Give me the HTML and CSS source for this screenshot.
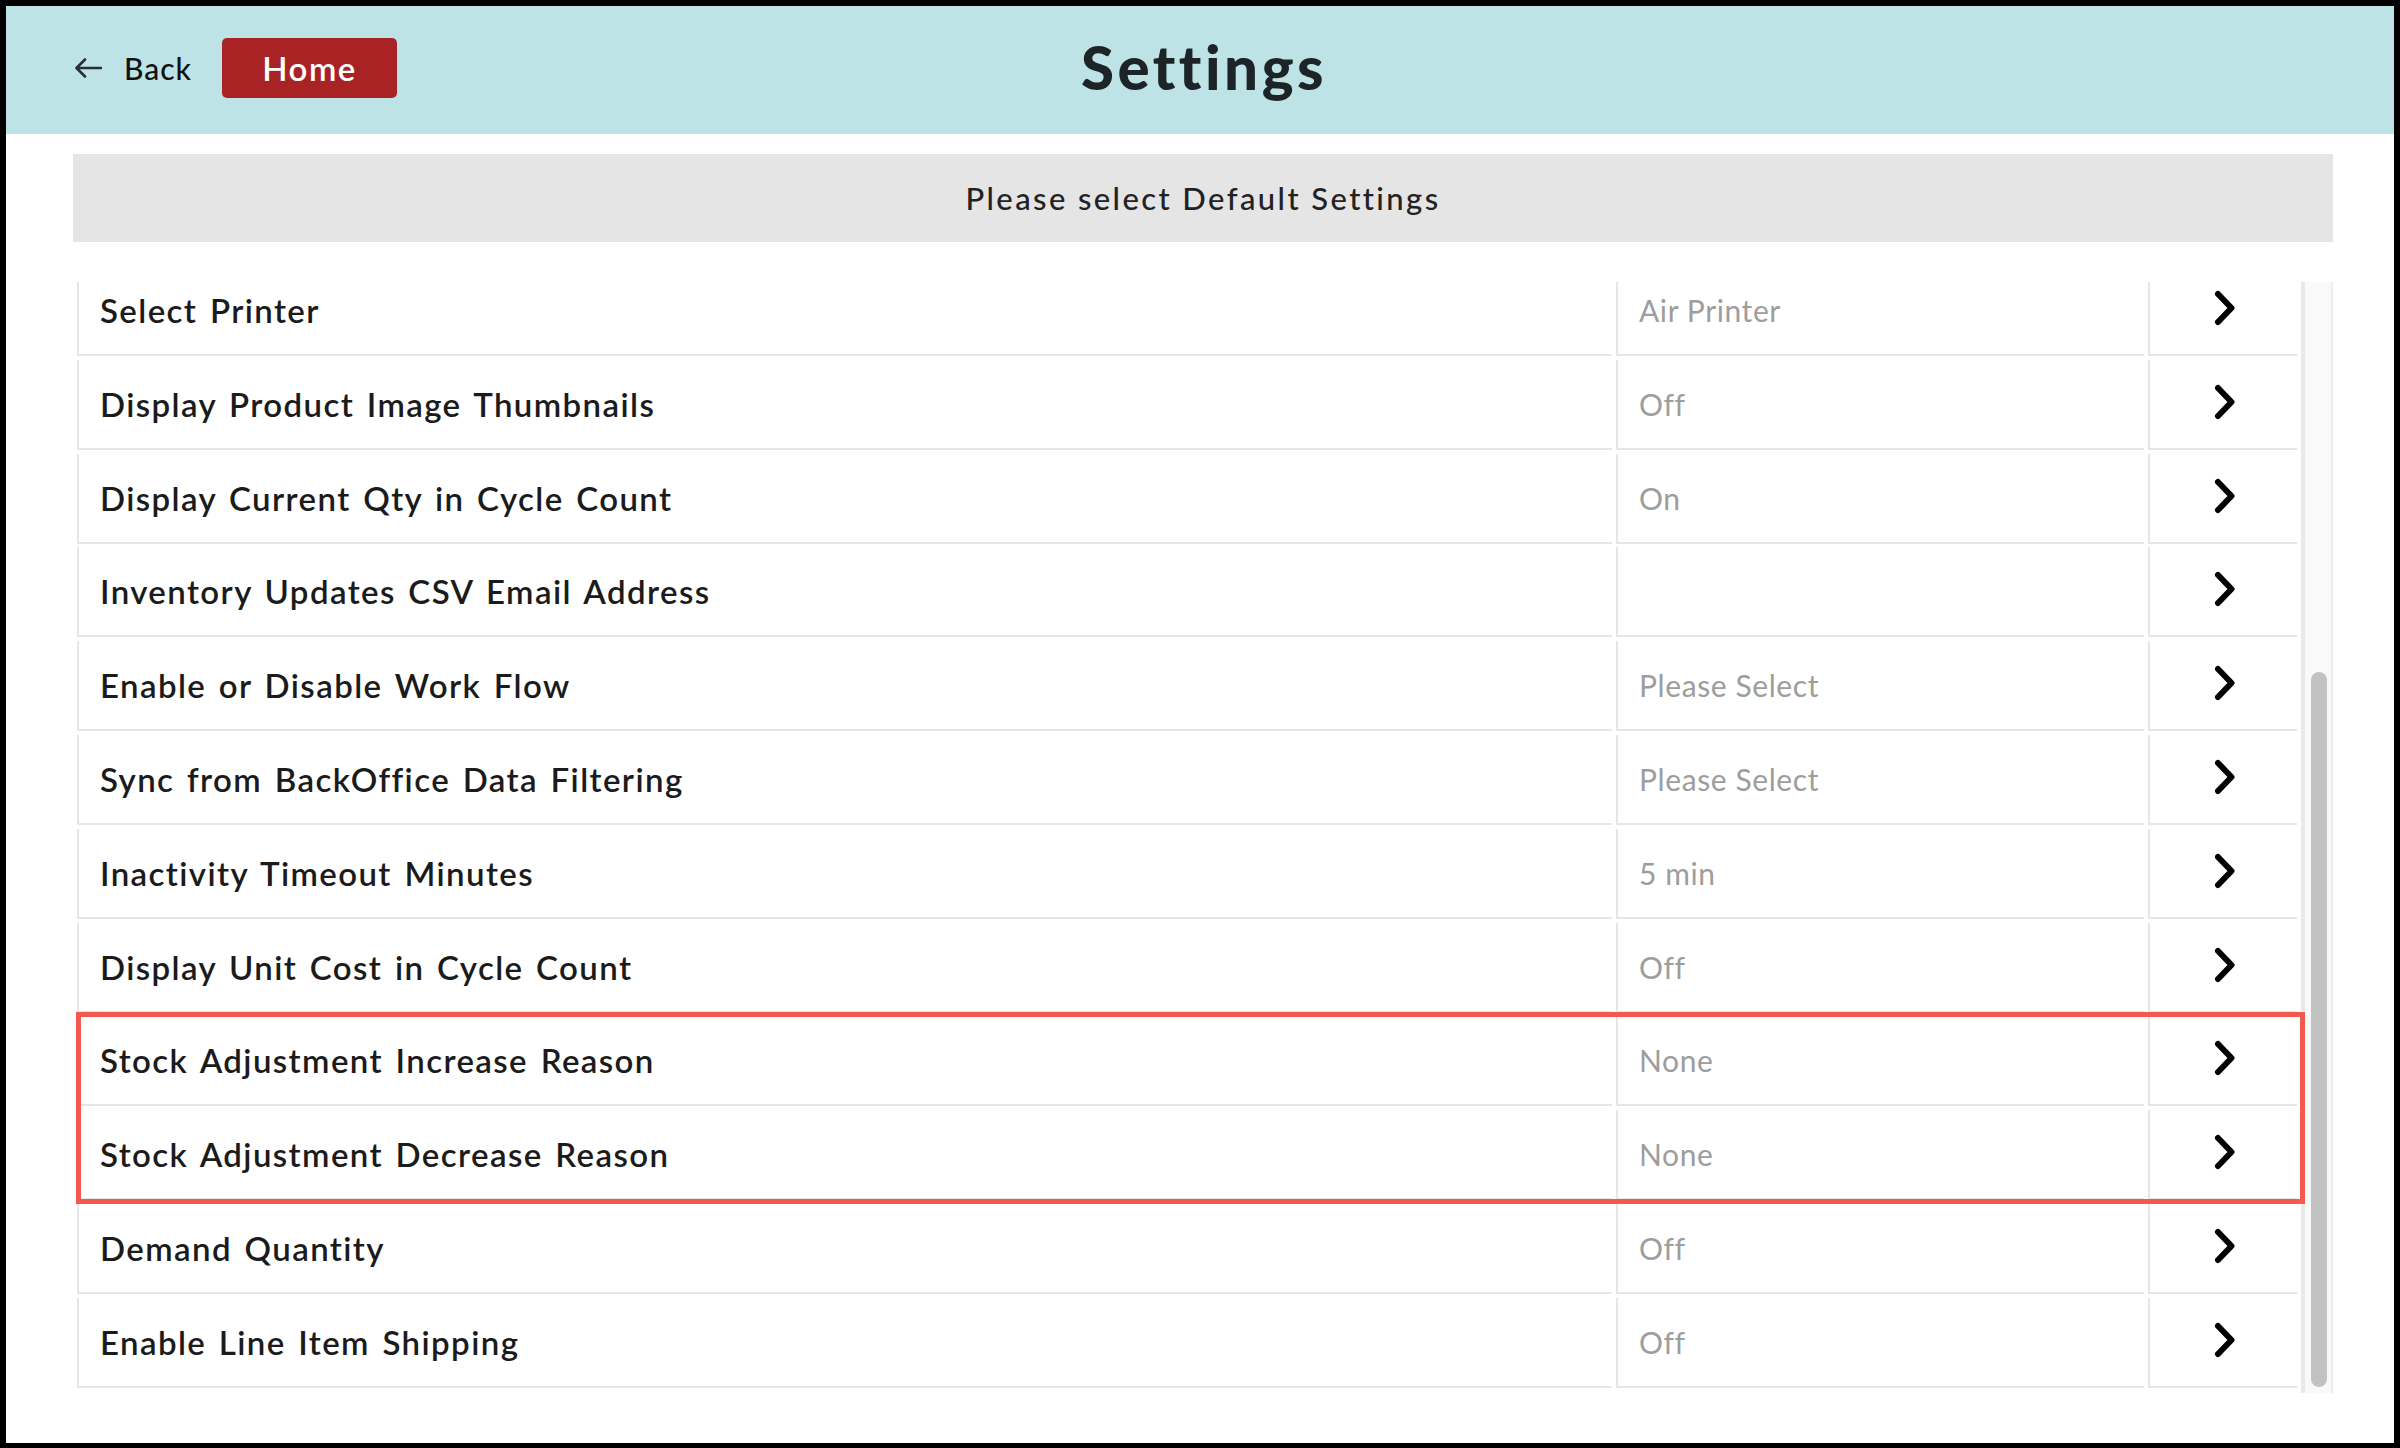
FILE: index.html
```html
<!DOCTYPE html>
<html lang="en">
<head>
<meta charset="utf-8">
<title>Settings</title>
<link rel="stylesheet" href="styles.css">
</head>
<body>
<div class="frame">
  <header class="topbar">
    <div class="nav-left">
      <a class="back" href="#">
        <svg class="back-icon" width="28" height="22" viewBox="0 0 28 22" aria-hidden="true">
          <path d="M27 11H3M11 2.5L2.5 11L11 19.5" fill="none" stroke="#2a2f31" stroke-width="2.6" stroke-linecap="round" stroke-linejoin="round"/>
        </svg>
        <span>Back</span>
      </a>
      <button class="home" type="button">Home</button>
    </div>
    <h1 class="title">Settings</h1>
    <div class="nav-right"></div>
  </header>

  <main class="content">
    <div class="banner">Please select Default Settings</div>

    <div class="list-area">
      <div class="list">
        <div class="rows">
          <div class="row"><div class="cell label">Select Printer</div><div class="cell value">Air Printer</div><div class="cell go"><svg class="chev" width="22" height="36" viewBox="0 0 22 36"><path d="M4 4L17.5 18L4 32" fill="none" stroke="#000" stroke-width="6" stroke-linecap="round" stroke-linejoin="round"/></svg></div></div>
          <div class="row"><div class="cell label">Display Product Image Thumbnails</div><div class="cell value">Off</div><div class="cell go"><svg class="chev" width="22" height="36" viewBox="0 0 22 36"><path d="M4 4L17.5 18L4 32" fill="none" stroke="#000" stroke-width="6" stroke-linecap="round" stroke-linejoin="round"/></svg></div></div>
          <div class="row"><div class="cell label">Display Current Qty in Cycle Count</div><div class="cell value">On</div><div class="cell go"><svg class="chev" width="22" height="36" viewBox="0 0 22 36"><path d="M4 4L17.5 18L4 32" fill="none" stroke="#000" stroke-width="6" stroke-linecap="round" stroke-linejoin="round"/></svg></div></div>
          <div class="row"><div class="cell label">Inventory Updates CSV Email Address</div><div class="cell value"></div><div class="cell go"><svg class="chev" width="22" height="36" viewBox="0 0 22 36"><path d="M4 4L17.5 18L4 32" fill="none" stroke="#000" stroke-width="6" stroke-linecap="round" stroke-linejoin="round"/></svg></div></div>
          <div class="row"><div class="cell label">Enable or Disable Work Flow</div><div class="cell value">Please Select</div><div class="cell go"><svg class="chev" width="22" height="36" viewBox="0 0 22 36"><path d="M4 4L17.5 18L4 32" fill="none" stroke="#000" stroke-width="6" stroke-linecap="round" stroke-linejoin="round"/></svg></div></div>
          <div class="row"><div class="cell label">Sync from BackOffice Data Filtering</div><div class="cell value">Please Select</div><div class="cell go"><svg class="chev" width="22" height="36" viewBox="0 0 22 36"><path d="M4 4L17.5 18L4 32" fill="none" stroke="#000" stroke-width="6" stroke-linecap="round" stroke-linejoin="round"/></svg></div></div>
          <div class="row"><div class="cell label">Inactivity Timeout Minutes</div><div class="cell value">5 min</div><div class="cell go"><svg class="chev" width="22" height="36" viewBox="0 0 22 36"><path d="M4 4L17.5 18L4 32" fill="none" stroke="#000" stroke-width="6" stroke-linecap="round" stroke-linejoin="round"/></svg></div></div>
          <div class="row"><div class="cell label">Display Unit Cost in Cycle Count</div><div class="cell value">Off</div><div class="cell go"><svg class="chev" width="22" height="36" viewBox="0 0 22 36"><path d="M4 4L17.5 18L4 32" fill="none" stroke="#000" stroke-width="6" stroke-linecap="round" stroke-linejoin="round"/></svg></div></div>
          <div class="highlight">
            <div class="row"><div class="cell label">Stock Adjustment Increase Reason</div><div class="cell value">None</div><div class="cell go"><svg class="chev" width="22" height="36" viewBox="0 0 22 36"><path d="M4 4L17.5 18L4 32" fill="none" stroke="#000" stroke-width="6" stroke-linecap="round" stroke-linejoin="round"/></svg></div></div>
            <div class="row"><div class="cell label">Stock Adjustment Decrease Reason</div><div class="cell value">None</div><div class="cell go"><svg class="chev" width="22" height="36" viewBox="0 0 22 36"><path d="M4 4L17.5 18L4 32" fill="none" stroke="#000" stroke-width="6" stroke-linecap="round" stroke-linejoin="round"/></svg></div></div>
          </div>
          <div class="row"><div class="cell label">Demand Quantity</div><div class="cell value">Off</div><div class="cell go"><svg class="chev" width="22" height="36" viewBox="0 0 22 36"><path d="M4 4L17.5 18L4 32" fill="none" stroke="#000" stroke-width="6" stroke-linecap="round" stroke-linejoin="round"/></svg></div></div>
          <div class="row"><div class="cell label">Enable Line Item Shipping</div><div class="cell value">Off</div><div class="cell go"><svg class="chev" width="22" height="36" viewBox="0 0 22 36"><path d="M4 4L17.5 18L4 32" fill="none" stroke="#000" stroke-width="6" stroke-linecap="round" stroke-linejoin="round"/></svg></div></div>
        </div>
      </div>
      <div class="scrollbar"><div class="thumb"></div></div>
    </div>
  </main>
</div>
</body>
</html>
```

FILE: styles.css
```css
* { box-sizing: border-box; }

html, body {
  margin: 0;
  padding: 0;
  background: #000;
}

body {
  width: 2400px;
  height: 1448px;
  padding: 6px 6px 5px 6px;
  font-family: "Lato", "Noto Sans", sans-serif;
  color: #1b1b1b;
}

.frame {
  width: 2388px;
  height: 1437px;
  background: #fff;
  overflow: hidden;
}

/* ---------- header ---------- */
.topbar {
  height: 128px;
  background: #bde3e6;
  display: grid;
  grid-template-columns: 1fr auto 1fr;
  align-items: center;
}

.nav-left {
  display: flex;
  align-items: center;
  gap: 30px;
  margin-top: -4px;
  padding-left: 68px;
}

.back {
  display: flex;
  align-items: center;
  gap: 22px;
  color: #111;
  text-decoration: none;
  font-size: 30px;
  font-weight: 500;
  letter-spacing: 1px;
}

.back-icon { display: block; }

.home {
  width: 175px;
  height: 60px;
  border: none;
  border-radius: 5px;
  background: #a92325;
  color: #fff;
  font-family: "Lato", "Noto Sans", sans-serif;
  font-size: 33px;
  font-weight: 600;
  letter-spacing: 1.5px;
  padding: 0;
}

.title {
  margin: 0;
  font-size: 60px;
  font-weight: 900;
  color: #1d2427;
  letter-spacing: 3.5px;
  margin-top: -6px;
  margin-left: 8px;
}

/* ---------- content ---------- */
.content {
  padding: 20px 61px 0 67px;
}

.banner {
  height: 88px;
  background: #e5e5e5;
  display: flex;
  align-items: center;
  justify-content: center;
  font-size: 31px;
  font-weight: 500;
  color: #222;
  letter-spacing: 2.4px;
}

.list-area {
  margin-top: 40px;
  height: 1111px;
  display: flex;
}

.list {
  flex: 1;
  padding: 0 4px;
  overflow-x: visible;
  overflow-y: clip;
}

.rows {
  margin-top: -16px;
  display: flex;
  flex-direction: column;
  gap: 3.8px;
}

.highlight {
  position: relative;
  display: flex;
  flex-direction: column;
  gap: 3.8px;
}

.highlight::after {
  content: "";
  position: absolute;
  top: -4px;
  bottom: -4px;
  left: -1px;
  right: -8px;
  border: 5px solid #f35a4f;
  pointer-events: none;
}

.row {
  display: flex;
  gap: 4px;
  height: 90px;
}

.cell {
  height: 90px;
  border-left: 2px solid #e6e6e6;
  border-bottom: 2px solid #e6e6e6;
  display: flex;
  align-items: center;
  padding-left: 21px;
}

.label {
  flex: 1;
  font-size: 33px;
  font-weight: 600;
  color: #1b1b1b;
  letter-spacing: 1.4px;
  word-spacing: 3px;
}

.value {
  width: 528px;
  font-size: 30px;
  font-weight: 400;
  color: #9d9d9d;
  letter-spacing: 0.6px;
}

.go {
  width: 149px;
  padding-left: 0;
  justify-content: center;
}

.chev { display: block; margin-left: 2px; margin-top: -4px; }

/* ---------- scrollbar ---------- */
.scrollbar {
  width: 32px;
  height: 1111px;
  background: #f9f9f9;
  border-left: 4px solid #e9e9e9;
  border-right: 2px solid #eeeeee;
  padding: 390px 0 0 6px;
}

.thumb {
  width: 16px;
  height: 715px;
  border-radius: 8px;
  background: #c2c2c2;
}
```
